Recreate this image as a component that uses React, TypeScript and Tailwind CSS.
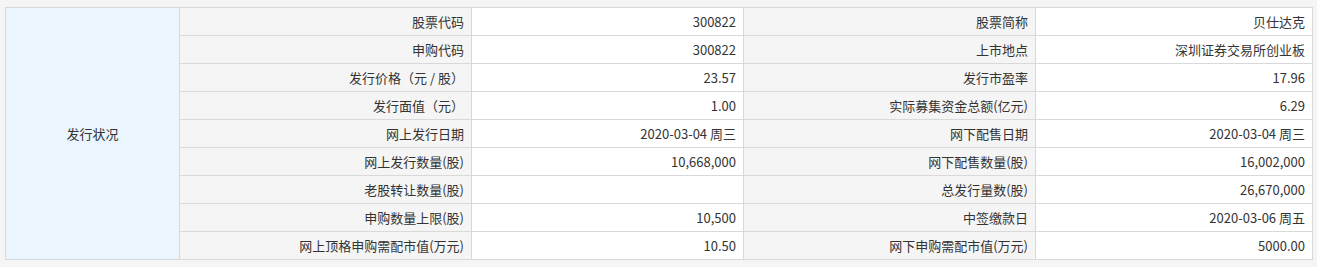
import React from 'react';

const rows: [string, string, string, string][] = [
  ['股票代码', '300822', '股票简称', '贝仕达克'],
  ['申购代码', '300822', '上市地点', '深圳证券交易所创业板'],
  ['发行价格（元 / 股）', '23.57', '发行市盈率', '17.96'],
  ['发行面值（元）', '1.00', '实际募集资金总额(亿元)', '6.29'],
  ['网上发行日期', '2020-03-04 周三', '网下配售日期', '2020-03-04 周三'],
  ['网上发行数量(股)', '10,668,000', '网下配售数量(股)', '16,002,000'],
  ['老股转让数量(股)', '', '总发行量数(股)', '26,670,000'],
  ['申购数量上限(股)', '10,500', '中签缴款日', '2020-03-06 周五'],
  ['网上顶格申购需配市值(万元)', '10.50', '网下申购需配市值(万元)', '5000.00'],
];

const App: React.FC = () => {
  return (
    <div className="min-h-screen bg-[#f5f5f5] pt-[7px] pl-[5px] pr-[5px] text-[13px] text-[#333] font-['Noto_Sans_CJK_SC','Microsoft_YaHei',sans-serif]">
      <table className="border-collapse w-[1307px] table-fixed">
        <colgroup>
          <col className="w-[174px]" />
          <col className="w-[292px]" />
          <col className="w-[272px]" />
          <col className="w-[292px]" />
          <col className="w-[277px]" />
        </colgroup>
        <tbody>
          {rows.map((r, i) => (
            <tr key={i} className="h-[28px]">
              {i === 0 && (
                <td rowSpan={rows.length} className="border border-[#d9d9d9] bg-[#ebf5fe] text-center align-middle">
                  发行状况
                </td>
              )}
              <td className="border border-[#d9d9d9] bg-[#f5f5f5] text-right pr-[7px] leading-[27px]">{r[0]}</td>
              <td className="border border-[#d9d9d9] bg-white text-right pr-[7px] leading-[27px]">{r[1]}</td>
              <td className="border border-[#d9d9d9] bg-[#f5f5f5] text-right pr-[7px] leading-[27px]">{r[2]}</td>
              <td className="border border-[#d9d9d9] bg-white text-right pr-[7px] leading-[27px]">{r[3]}</td>
            </tr>
          ))}
        </tbody>
      </table>
    </div>
  );
};

export default App;
